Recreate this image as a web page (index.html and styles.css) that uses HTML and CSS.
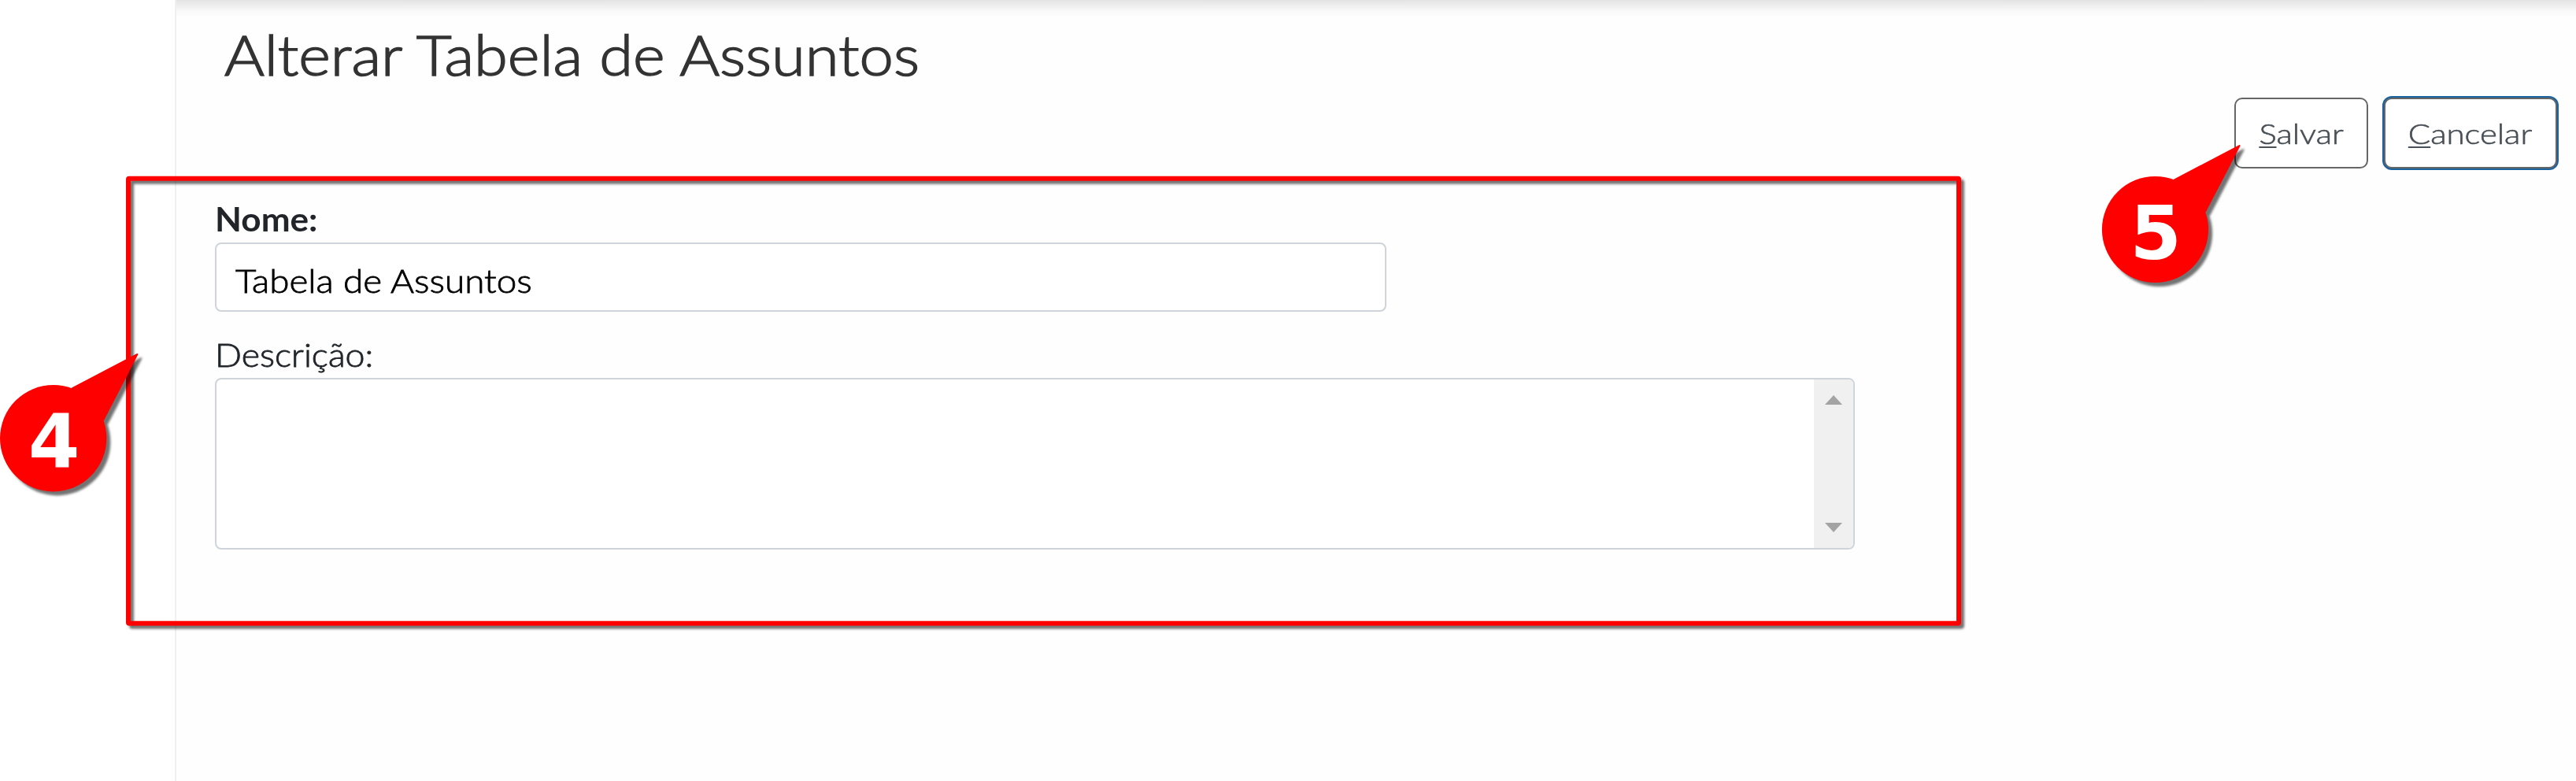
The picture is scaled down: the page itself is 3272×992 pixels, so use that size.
FILE: index.html
```html
<!DOCTYPE html>
<html lang="pt-BR">
<head>
<meta charset="utf-8">
<title>Alterar Tabela de Assuntos</title>
<link rel="stylesheet" href="styles.css">
</head>
<body>
<main class="panel">
  <h1 class="title"><span>Alterar Tabela de Assuntos</span></h1>
  <div class="actions">
    <button class="btn save"><span><u>S</u>alvar</span></button>
    <button class="btn cancel"><span><u>C</u>ancelar</span></button>
  </div>
  <form class="form">
    <label class="label required"><span>Nome:</span></label>
    <div class="input"><span>Tabela de Assuntos</span></div>
    <label class="label description"><span>Descrição:</span></label>
    <div class="textarea">
      <div class="scrollbar">
        <svg width="22" height="12"><path d="M0 12L11 0L22 12Z"/></svg>
        <svg width="22" height="12"><path d="M0 0L11 12L22 0Z"/></svg>
      </div>
    </div>
  </form>
</main>
<svg class="annotations" viewBox="0 0 3272 992">
  <rect class="frame" x="163" y="226.8" width="2325" height="565" rx="1"/>
  <g class="callout"><circle cx="67.7" cy="556.7" r="67.7"/><path d="M91 492.5L174 449Q175.8 448.6 175 451L132 534L80 556Z"/></g>
  <text class="digit" x="36" y="594">4</text>
  <g class="callout"><circle cx="2737.5" cy="291.5" r="67.6"/><path d="M2761 227.7L2844 184.2Q2846 183.7 2845.2 186L2802 269L2750 291Z"/></g>
  <text class="digit" x="2705.5" y="329">5</text>
</svg>
</body>
</html>
```
FILE: styles.css
```css
* { box-sizing: border-box; }
body { margin: 0; width: 3272px; height: 992px; overflow: hidden; position: relative; background: #fff; font-family: Lato, "Open Sans", sans-serif; color: #212529; }
.panel { height: 992px; margin-left: 222px; border-left: 2px solid #f0f0f0; background: linear-gradient(#e3e3e3 0, #eee 7px, #f9f9f9 14px, #fefefe 22px, #fefefe 100%); padding: 27px 24px 0 49px; }
.title { margin: 0 0 13px 12px; font-size: 70px; line-height: 84px; font-weight: 300; color: #333; -webkit-text-stroke: 1.5px #333; }
.title span, .label span, .input span, .btn span { display: inline-block; transform-origin: 0 50%; }
.title span { transform: scaleX(1.11); }
.actions { display: flex; justify-content: flex-end; gap: 20px; }
.btn { height: 90px; padding: 0; border: 2px solid #666; border-radius: 10px; background: #fff; font: 300 36px Lato, sans-serif; color: #495057; -webkit-text-stroke: .6px #495057; }
.btn span { transform: scaleX(1.165); transform-origin: 50% 50%; }
.btn u { text-decoration-thickness: 2px; text-underline-offset: 3px; }
.save { width: 170px; }
.cancel { width: 220px; box-shadow: 0 0 0 2px #1b639f; }
.form { margin-top: 39px; }
.label { display: block; margin: 0 0 5px; font-size: 42px; line-height: 50px; }
.required { font-weight: 700; }
.required span { transform: scaleX(1.05); }
.description { font-weight: 300; -webkit-text-stroke: .8px #212529; }
.description span { transform: scaleX(1.065); }
.input { width: 1488px; height: 88px; margin-bottom: 29px; padding: 4px 24px 0; border: 2px solid #ced4da; border-radius: 8px; background: #fff; font-size: 42px; line-height: 84px; font-weight: 300; color: #000; -webkit-text-stroke: .8px #000; }
.input span { transform: scaleX(1.09); }
.textarea { display: flex; justify-content: flex-end; width: 2083px; height: 218px; border: 2px solid #ced4da; border-radius: 8px; background: #fff; overflow: hidden; }
.scrollbar { display: flex; flex-direction: column; justify-content: space-between; align-items: center; width: 50px; padding: 20px 0; background: #f0f0f0; fill: #a3a3a3; }
.annotations { position: absolute; left: 0; top: 0; width: 3272px; height: 992px; }
.frame { fill: none; stroke: #f00; stroke-width: 6; filter: drop-shadow(4px 4px 1.5px rgba(0,0,0,.55)); }
.callout { fill: #f00; filter: drop-shadow(5px 5px 1.5px rgba(0,0,0,.55)); }
.digit { fill: #fff; font: bold 94px "DejaVu Sans", sans-serif; }
```
